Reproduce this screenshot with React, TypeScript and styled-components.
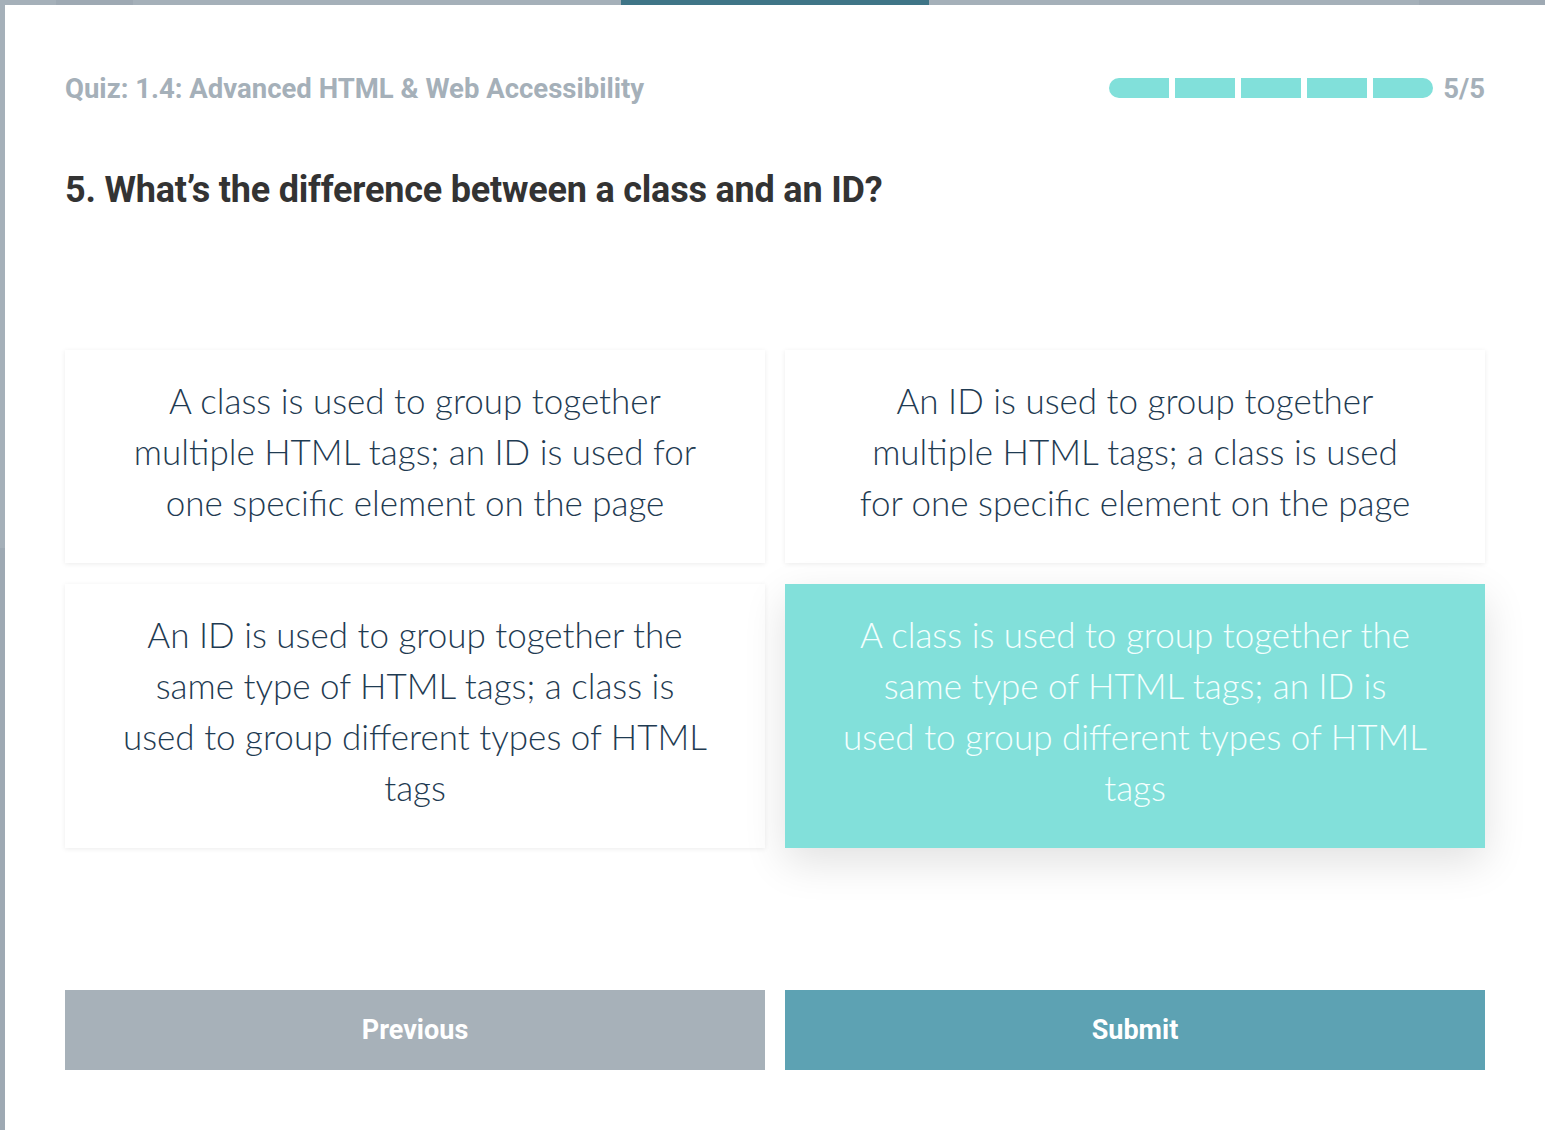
import React from "react";
import styled, { createGlobalStyle } from "styled-components";

const Global = createGlobalStyle`
  html, body { margin: 0; padding: 0; background: #a5b0b9; }
  #root { min-height: 1130px; }
  * { box-sizing: border-box; }
`;

const Page = styled.div`
  width: 1545px;
  height: 1130px;
  display: flex;
  flex-direction: column;
  background: #a5b0b9;
  overflow: hidden;
`;

const TopStrip = styled.div`
  display: flex;
  height: 5px;
  flex: none;
`;

const StripSeg = styled.div<{ $w: number; $tone: "grey" | "dark" | "teal" }>`
  width: ${(p) => p.$w}px;
  flex: ${(p) => (p.$w ? "none" : "1")};
  background: ${(p) =>
    p.$tone === "teal" ? "#3f7587" : p.$tone === "dark" ? "#9ea9b3" : "#a5b0b9"};
`;

const Body = styled.div`
  flex: 1;
  display: flex;
`;

const LeftRail = styled.div`
  width: 5px;
  flex: none;
  background: linear-gradient(#a5b0b9 0, #a5b0b9 543px, #9ea9b3 543px);
`;

const Panel = styled.main`
  flex: 1;
  background: #ffffff;
  padding: 68px 60px 0 60px;
  display: flex;
  flex-direction: column;
`;

const Header = styled.div`
  display: flex;
  align-items: center;
  justify-content: space-between;
  height: 30px;
`;

const QuizTitle = styled.div`
  font-family: Roboto, "Liberation Sans", sans-serif;
  font-weight: 700;
  font-size: 27.5px;
  color: #a5b0b9;
`;

const Progress = styled.div`
  display: flex;
  align-items: center;
  gap: 10px;
`;

const Segments = styled.div`
  display: flex;
  gap: 6px;
`;

const Segment = styled.div<{ $first?: boolean; $last?: boolean }>`
  width: 60px;
  height: 20px;
  background: #81e0da;
  border-radius: ${(p) =>
    p.$first ? "10px 0 0 10px" : p.$last ? "0 10px 10px 0" : "0"};
`;

const Count = styled.span`
  font-family: Roboto, "Liberation Sans", sans-serif;
  font-weight: 700;
  font-size: 27.5px;
  color: #a5b0b9;
`;

const Question = styled.h1`
  margin: 67px 0 0 0;
  height: 40px;
  line-height: 40px;
  font-family: Roboto, "Liberation Sans", sans-serif;
  font-weight: 700;
  font-size: 36px;
  letter-spacing: -0.2px;
  color: #333333;
`;

const Answers = styled.div`
  margin-top: 140px;
  display: grid;
  grid-template-columns: 1fr 1fr;
  column-gap: 20px;
  row-gap: 21px;
`;

const Card = styled.button<{ $selected?: boolean }>`
  border: none;
  padding: 25px 20px 35px;
  text-align: center;
  font-family: Lato, "Open Sans", sans-serif;
  font-weight: 300;
  font-size: 35px;
  line-height: 51px;
  background: ${(p) => (p.$selected ? "#82e0da" : "#ffffff")};
  color: ${(p) => (p.$selected ? "#f3fffe" : "#1f3b52")};
  box-shadow: ${(p) =>
    p.$selected
      ? "0 14px 40px rgba(0, 0, 0, 0.12)"
      : "0 1px 5px rgba(0, 0, 0, 0.08)"};
  cursor: pointer;
`;

const Line = styled.span`
  display: block;
  white-space: nowrap;
`;

const Actions = styled.div`
  margin-top: 142px;
  display: grid;
  grid-template-columns: 1fr 1fr;
  column-gap: 20px;
`;

const ActionButton = styled.button<{ $variant: "prev" | "submit" }>`
  height: 80px;
  border: none;
  background: ${(p) => (p.$variant === "submit" ? "#5da2b3" : "#a7b1b9")};
  color: #ffffff;
  font-family: Roboto, "Liberation Sans", sans-serif;
  font-weight: 700;
  font-size: 27px;
  cursor: pointer;
`;

const answers: { lines: string[]; selected?: boolean }[] = [
  {
    lines: [
      "A class is used to group together",
      "multiple HTML tags; an ID is used for",
      "one specific element on the page",
    ],
  },
  {
    lines: [
      "An ID is used to group together",
      "multiple HTML tags; a class is used",
      "for one specific element on the page",
    ],
  },
  {
    lines: [
      "An ID is used to group together the",
      "same type of HTML tags; a class is",
      "used to group different types of HTML",
      "tags",
    ],
  },
  {
    lines: [
      "A class is used to group together the",
      "same type of HTML tags; an ID is",
      "used to group different types of HTML",
      "tags",
    ],
    selected: true,
  },
];

export default function App() {
  return (
    <Page>
      <Global />
      <TopStrip>
        <StripSeg $w={56} $tone="grey" />
        <StripSeg $w={77} $tone="dark" />
        <StripSeg $w={488} $tone="grey" />
        <StripSeg $w={308} $tone="teal" />
        <StripSeg $w={490} $tone="grey" />
        <StripSeg $w={0} $tone="dark" />
      </TopStrip>
      <Body>
        <LeftRail />
        <Panel>
          <Header>
            <QuizTitle>Quiz: 1.4: Advanced HTML &amp; Web Accessibility</QuizTitle>
            <Progress>
              <Segments>
                {[0, 1, 2, 3, 4].map((i) => (
                  <Segment key={i} $first={i === 0} $last={i === 4} />
                ))}
              </Segments>
              <Count>5/5</Count>
            </Progress>
          </Header>
          <Question>5. What’s the difference between a class and an ID?</Question>
          <Answers>
            {answers.map((a, i) => (
              <Card key={i} $selected={a.selected}>
                {a.lines.map((l, j) => (
                  <Line key={j}>{l}</Line>
                ))}
              </Card>
            ))}
          </Answers>
          <Actions>
            <ActionButton $variant="prev">Previous</ActionButton>
            <ActionButton $variant="submit">Submit</ActionButton>
          </Actions>
        </Panel>
      </Body>
    </Page>
  );
}
